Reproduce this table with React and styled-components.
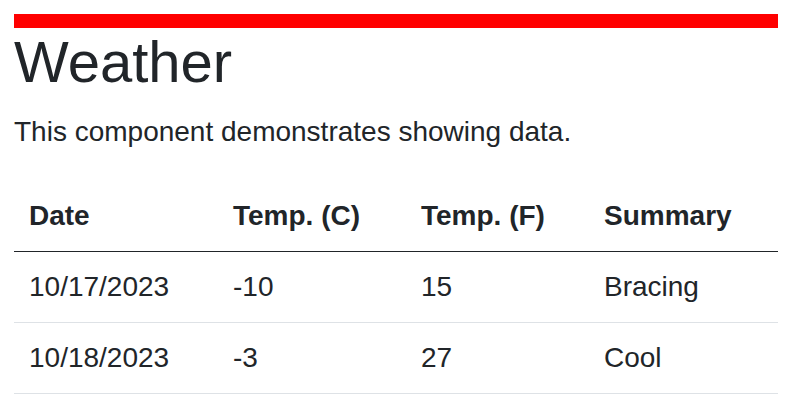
import React from 'react';
import styled, { createGlobalStyle } from 'styled-components';

const GlobalStyle = createGlobalStyle`
  html, body {
    margin: 0;
    padding: 0;
    background: #fff;
  }
  body {
    font-family: "Liberation Sans", Arial, sans-serif;
    color: #212529;
  }
`

const Page = styled.main`
  padding: 14px 11px 0 14px;
`

const TopBar = styled.div`
  height: 14px;
  background: #ff0000;
`

const Title = styled.h1`
  font-size: 58px;
  font-weight: 400;
  line-height: 1.2;
  margin: -1px 0 14px;
`

const Lead = styled.p`
  font-size: 28px;
  line-height: 42px;
  margin: 0 0 28px;
`

const Table = styled.table`
  width: 100%;
  table-layout: fixed;
  border-collapse: collapse;
  font-size: 28px;
  line-height: 42px;
`

const Head = styled.th`
  box-sizing: border-box;
  text-align: left;
  font-weight: 700;
  padding: 14px 15px;
  border-bottom: 1px solid #212529;
  width: ${p => p.$w}px;
`

const Cell = styled.td`
  padding: 14px 15px;
  border-bottom: 1px solid #dee2e6;
  white-space: nowrap;
`

const forecasts = [
    {date: '10/17/2023', c: -10, f: 15, summary: 'Bracing'},
    {date: '10/18/2023', c: -3, f: 27, summary: 'Cool'},
];

const App = () => {

    return(
        <Page>
            <GlobalStyle />
            <TopBar />
            <Title>Weather</Title>
            <Lead>This component demonstrates showing data.</Lead>
            <Table>
                <thead>
                    <tr>
                        <Head $w={204}>Date</Head>
                        <Head $w={188}>Temp. (C)</Head>
                        <Head $w={183}>Temp. (F)</Head>
                        <Head $w={189}>Summary</Head>
                    </tr>
                </thead>
                <tbody>
                    {forecasts.map(item => (
                        <tr key={item.date}>
                            <Cell>{item.date}</Cell>
                            <Cell>{item.c}</Cell>
                            <Cell>{item.f}</Cell>
                            <Cell>{item.summary}</Cell>
                        </tr>
                    ))}
                </tbody>
            </Table>
        </Page>
    )
};

export default App;
